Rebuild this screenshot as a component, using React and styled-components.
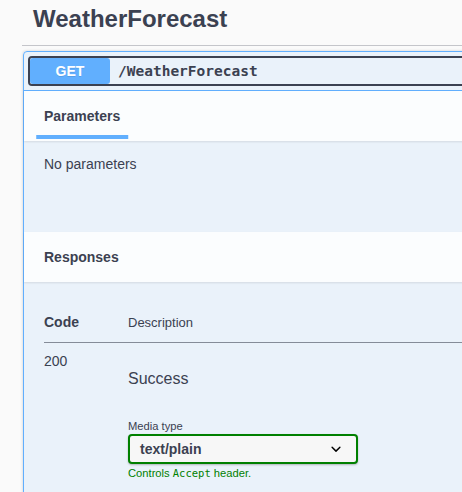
import React from "react";
import styled, { createGlobalStyle } from "styled-components";

const GlobalStyle = createGlobalStyle`
    body {
        margin: 0;
        background: #fafafa;
        font-family: "Liberation Sans", Arial, sans-serif;
        color: #3b4151;
        overflow: hidden;
    }
`;

export default function App() {
    return (
        <>
            <GlobalStyle />
            <Page>
                <TagHeader>WeatherForecast</TagHeader>
                <OpBlock>
                    <Summary>
                        <SummaryControl>
                            <MethodBadge>GET</MethodBadge>
                            <Path>/WeatherForecast</Path>
                        </SummaryControl>
                    </Summary>

                    <SectionHeader>
                        <TabTitle active>Parameters</TabTitle>
                    </SectionHeader>
                    <ParamsBody>
                        <Plain>No parameters</Plain>
                    </ParamsBody>

                    <SectionHeader>
                        <HeaderTitle>Responses</HeaderTitle>
                    </SectionHeader>
                    <ResponsesBody>
                        <Table>
                            <thead>
                                <tr>
                                    <CodeHead>Code</CodeHead>
                                    <DescHead>Description</DescHead>
                                </tr>
                            </thead>
                            <tbody>
                                <tr>
                                    <StatusCell>200</StatusCell>
                                    <DescCell>
                                        <Markdown>Success</Markdown>
                                        <MediaControls>
                                            <MediaTitle>Media type</MediaTitle>
                                            <Select>
                                                <span>text/plain</span>
                                                <svg width="20" height="20" viewBox="0 0 20 20">
                                                    <path
                                                        fill="#000"
                                                        d="M13.418 7.859a.695.695 0 01.978 0 .68.68 0 010 .969l-3.908 3.83a.697.697 0 01-.979 0l-3.908-3.83a.68.68 0 010-.969.695.695 0 01.978 0L10 11l3.418-3.141z"
                                                    />
                                                </svg>
                                            </Select>
                                            <AcceptMessage>
                                                Controls <code>Accept</code> header.
                                            </AcceptMessage>
                                        </MediaControls>
                                    </DescCell>
                                </tr>
                            </tbody>
                        </Table>
                    </ResponsesBody>
                </OpBlock>
            </Page>
        </>
    );
}

const Page = styled.div`
    padding-left: 22px;
    box-sizing: border-box;
    width: 100vw;
    overflow: hidden;
`;

const TagHeader = styled.h3`
    margin: 0;
    padding: 5px 0 12px 11px;
    font-size: 24px;
    line-height: 28px;
    font-weight: 700;
    color: #3b4151;
    border-bottom: 1px solid #c4c5ca;
`;

const OpBlock = styled.div`
    margin: 5px -60px 0 1px;
    border: 1px solid #61affe;
    border-radius: 4px;
    background: rgba(97, 175, 254, 0.1);
    box-shadow: 0 0 3px rgba(0, 0, 0, 0.19);
`;

const Summary = styled.div`
    padding: 4px;
    border-bottom: 1px solid #61affe;
`;

const SummaryControl = styled.div`
    display: flex;
    align-items: center;
    height: 30px;
    box-sizing: border-box;
    border: 2px solid #3b4151;
    border-radius: 4px;
`;

const MethodBadge = styled.span`
    display: flex;
    align-items: center;
    justify-content: center;
    min-width: 80px;
    height: 100%;
    background: #61affe;
    color: #fff;
    font-size: 14px;
    font-weight: 700;
    border-radius: 3px;
    text-shadow: 0 1px 0 rgba(0, 0, 0, 0.1);
`;

const Path = styled.span`
    padding: 0 8px;
    font-family: "DejaVu Sans Mono", "Liberation Mono", monospace;
    font-size: 14.5px;
    font-weight: 700;
    color: #3b4151;
`;

const SectionHeader = styled.div`
    display: flex;
    align-items: center;
    height: 50px;
    padding: 0 20px;
    box-sizing: border-box;
    background: rgba(255, 255, 255, 0.8);
    box-shadow: 0 1px 2px rgba(0, 0, 0, 0.1);
    position: relative;
`;

const HeaderTitle = styled.h4`
    margin: 0;
    font-size: 14px;
    font-weight: 700;
    color: #3b4151;
`;

const TabTitle = styled.h4`
    margin: 0;
    position: relative;
    font-size: 14px;
    font-weight: 700;
    color: #3b4151;
    ${(props) =>
        props.active &&
        `
    &::after {
        content: "";
        position: absolute;
        left: 50%;
        bottom: -15px;
        width: 120%;
        height: 4px;
        transform: translateX(-50%);
        background: #61affe;
    }
  `}
`;

const ParamsBody = styled.div`
    padding: 15px 20px;
    height: 91px;
    box-sizing: border-box;
`;

const Plain = styled.p`
    margin: 0;
    font-size: 14px;
    color: #3b4151;
`;

const ResponsesBody = styled.div`
    padding: 20px;
`;

const Table = styled.table`
    width: 100%;
    border-collapse: collapse;
`;

const CodeHead = styled.th`
    width: 84px;
    padding: 12px 0;
    text-align: left;
    font-size: 14px;
    font-weight: 700;
    color: #3b4151;
    border-bottom: 1px solid rgba(59, 65, 81, 0.35);
`;

const DescHead = styled.th`
    padding: 12px 0;
    text-align: left;
    font-size: 13px;
    font-weight: 400;
    color: #3b4151;
    border-bottom: 1px solid rgba(59, 65, 81, 0.35);
`;

const StatusCell = styled.td`
    padding: 10px 0 0;
    vertical-align: top;
    font-size: 14px;
    color: #3b4151;
`;

const DescCell = styled.td`
    padding: 10px 0 0;
    vertical-align: top;
`;

const Markdown = styled.p`
    margin: 17px 0 16px;
    font-size: 16px;
    color: #3b4151;
`;

const MediaControls = styled.div`
    padding-top: 16px;
`;

const MediaTitle = styled.small`
    display: block;
    margin-bottom: 2px;
    font-size: 11.2px;
    color: #3b4151;
`;

const Select = styled.div`
    display: flex;
    align-items: center;
    justify-content: space-between;
    width: 230px;
    height: 30px;
    box-sizing: border-box;
    padding: 0 10px;
    border: 2px solid #008000;
    border-radius: 4px;
    background: #f7f7f7;
    box-shadow: 0 1px 2px 0 rgba(0, 0, 0, 0.25);
    font-size: 14px;
    font-weight: 700;
    color: #3b4151;
`;

const AcceptMessage = styled.small`
    display: block;
    margin-top: 3px;
    font-size: 11.2px;
    color: #008000;

    code {
        font-family: "DejaVu Sans Mono", "Liberation Mono", monospace;
        font-size: 10.5px;
    }
`;
